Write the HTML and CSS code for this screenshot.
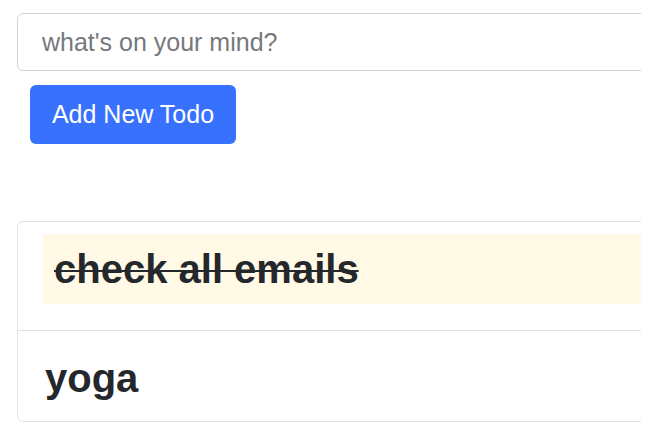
FILE: index.html
```html
<!DOCTYPE html>
<html>
<head>
<meta charset="utf-8">
<link rel="stylesheet" href="styles.css">
</head>
<body>
<div class="page">
  <div class="form">
    <input class="todo-input" type="text" placeholder="what's on your mind?">
    <button class="add-btn">Add New Todo</button>
  </div>
  <ul class="todo-list">
    <li class="todo-item first"><h2 class="todo-text done">check all emails</h2></li>
    <li class="todo-item last"><h2 class="todo-text">yoga</h2></li>
  </ul>
</div>
</body>
</html>
```
FILE: styles.css
```css
html, body {
  margin: 0;
  padding: 0;
  background: #ffffff;
}
.page {
  width: 641px;
  overflow: hidden;
  padding: 13px 0 0 17px;
  box-sizing: border-box;
  font-family: "Liberation Sans", Arial, sans-serif;
  color: #212529;
}
.form {
  display: flex;
  flex-direction: column;
  align-items: flex-start;
}
.todo-input {
  width: 700px;
  height: 58px;
  box-sizing: border-box;
  border: 1px solid #cfd3d7;
  border-radius: 6px;
  padding: 0 24px;
  font-family: "Liberation Sans", Arial, sans-serif;
  font-size: 25px;
  color: #212529;
  outline: none;
  margin: 0;
}
.todo-input::placeholder {
  color: #75797d;
}
.add-btn {
  margin: 14px 0 0 13px;
  width: 206px;
  height: 59px;
  border: none;
  border-radius: 6px;
  background: #3771fe;
  color: #ffffff;
  font-family: "Liberation Sans", Arial, sans-serif;
  font-size: 25px;
  padding: 0;
}
.todo-list {
  list-style: none;
  margin: 77px 0 0 0;
  padding: 0;
  width: 700px;
  border: 1px solid #e2e2e2;
  border-radius: 6px;
}
.todo-item {
  padding: 12px 24px 26px 25px;
}
.todo-item.last {
  border-top: 1px solid #e2e2e2;
  padding-bottom: 8px;
}
.todo-text {
  margin: 0;
  height: 70px;
  line-height: 70px;
  font-size: 40px;
  font-weight: 700;
  padding-left: 11px;
  color: #24282c;
}
.todo-item.last .todo-text {
  padding-left: 2px;
}
.todo-text.done {
  background: #fff9e6;
  text-decoration: line-through;
  text-decoration-thickness: 2px;
}
```
